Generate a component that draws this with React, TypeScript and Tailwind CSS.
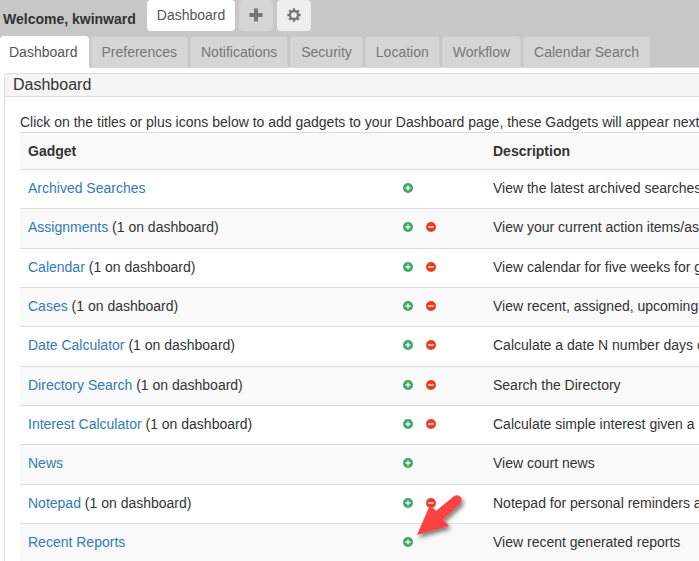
type Gadget = { name: string; onDashboard: boolean; description: string };

const gadgets: Gadget[] = [
  { name: "Archived Searches", onDashboard: false, description: "View the latest archived searches" },
  { name: "Assignments", onDashboard: true, description: "View your current action items/assignments" },
  { name: "Calendar", onDashboard: true, description: "View calendar for five weeks for given" },
  { name: "Cases", onDashboard: true, description: "View recent, assigned, upcoming" },
  { name: "Date Calculator", onDashboard: true, description: "Calculate a date N number days or" },
  { name: "Directory Search", onDashboard: true, description: "Search the Directory" },
  { name: "Interest Calculator", onDashboard: true, description: "Calculate simple interest given a" },
  { name: "News", onDashboard: false, description: "View court news" },
  { name: "Notepad", onDashboard: true, description: "Notepad for personal reminders and" },
  { name: "Recent Reports", onDashboard: false, description: "View recent generated reports" },
];

const pageTabs = ["Dashboard", "Preferences", "Notifications", "Security", "Location", "Workflow", "Calendar Search"];

function PlusIcon() {
  return (
    <svg viewBox="0 0 14 14" className="size-[14px]" aria-hidden="true">
      <path d="M5 .5h4V5h4.5v4H9v4.500H5V9H.5V5H5Z" fill="#777" />
    </svg>
  );
}

function GearIcon() {
  return (
    <svg viewBox="0 0 14 14" className="size-[14px]" aria-hidden="true">
      <circle cx="7" cy="7" r="4" fill="none" stroke="#777" strokeWidth="2.3" />
      <path
        d="M7 0.3v2.4M7 11.3v2.4M0.3 7h2.4M11.3 7h2.400M2.200 2.200l1.700 1.700M10.100 10.100l1.700 1.700M2.200 11.800l1.700-1.700M10.100 3.900l1.700-1.700"
        stroke="#777"
        strokeWidth="2.3"
      />
    </svg>
  );
}

function CircleIcon({ kind }: { kind: "plus" | "minus" }) {
  return (
    <svg viewBox="0 0 10 10" className="block size-[10px]" aria-hidden="true">
      <circle cx="5" cy="5" r="5" fill={kind === "plus" ? "#3fa866" : "#ec3b24"} />
      <path d={kind === "plus" ? "M2.5 5h5M5 2.5v5" : "M2.3 5h5.4"} stroke="#fff" strokeWidth="1.3" />
    </svg>
  );
}

function Arrow() {
  return (
    <svg
      viewBox="0 0 62 60"
      className="pointer-events-none absolute -top-[43px] left-[5px] h-[60px] w-[62px]"
      aria-hidden="true"
    >
      <defs>
        <filter id="arrow-shadow" x="-20%" y="-20%" width="150%" height="150%">
          <feDropShadow dx="2" dy="3" stdDeviation="2" floodColor="#000" floodOpacity="0.5" />
        </filter>
      </defs>
      <path
        d="M9 46L22 16L28 22L45.500 7.500Q50 4.500 53 8.500Q55 12 51.500 15.500L35 30.500L41 37Z"
        fill="#fc4343"
        filter="url(#arrow-shadow)"
      />
    </svg>
  );
}

export default function App() {
  return (
    <div className="overflow-hidden bg-white font-['Liberation_Sans',Arial,sans-serif] text-sm text-[#333]">
      <header className="bg-[#c7c7c7]">
        <div className="flex h-9 items-start">
          <strong className="pt-[9px] pr-[11px] pl-[3px] leading-5">Welcome, kwinward</strong>
          <div className="flex gap-1">
            <button className="h-[31px] rounded bg-white px-[10px] pb-[2px] text-[#555]">Dashboard</button>
            <button className="flex h-[31px] w-[34px] items-center justify-center rounded bg-[#d5d5d5] pb-[2px]" aria-label="Add">
              <PlusIcon />
            </button>
            <button className="flex h-[31px] w-[34px] items-center justify-center rounded bg-[#eee] pb-[2px]" aria-label="Settings">
              <GearIcon />
            </button>
          </div>
        </div>
        <nav className="flex h-8 gap-[2px] border-b border-[#ddd] whitespace-nowrap">
          {pageTabs.map((tab, i) => (
            <a
              key={tab}
              href="#"
              className={
                i === 0
                  ? "h-8 rounded-t bg-white pt-[6px] pr-[11px] pl-[9px] leading-5 text-[#555]"
                  : "h-8 rounded-t border border-b-0 border-[#d0d0d0] bg-[#d5d5d5] px-[10px] pt-[5px] leading-5 text-[#777]"
              }
            >
              {tab}
            </a>
          ))}
        </nav>
      </header>

      <main className="pt-[5px] pl-1">
        <section className="rounded-tl border-t border-l border-[#ddd]">
          <h1 className="rounded-tl border-b border-[#ddd] bg-[#f5f5f5] pl-2 text-base leading-[22px]">Dashboard</h1>
          <div className="pt-[15px] pl-[15px] whitespace-nowrap">
            <p className="leading-5">
              Click on the titles or plus icons below to add gadgets to your Dashboard page, these Gadgets will appear next
            </p>
            <table className="w-full table-fixed border-collapse text-left leading-5">
              <colgroup>
                <col className="w-[375px]" />
                <col className="w-[90px]" />
                <col />
              </colgroup>
              <thead>
                <tr className="h-[37px] border-t border-[#ddd] bg-[#f9f9f9]">
                  <th className="px-2">Gadget</th>
                  <th aria-label="Actions" />
                  <th className="px-2">Description</th>
                </tr>
              </thead>
              <tbody>
                {gadgets.map((g, i) => (
                  <tr
                    key={g.name}
                    className="h-[39px] border-t border-[#ddd] align-top even:bg-[#f9f9f9] nth-[3n+2]:h-[40px]"
                  >
                    <td className="px-2 pt-2">
                      <a href="#" className="text-[#337ab7]">{g.name}</a>
                      {g.onDashboard && " (1 on dashboard)"}
                    </td>
                    <td className="pt-2 pl-2">
                      <div className="relative flex h-5 items-center gap-[13px]">
                        <button aria-label={"Add " + g.name}>
                          <CircleIcon kind="plus" />
                        </button>
                        {g.onDashboard && (
                          <button aria-label={"Remove " + g.name}>
                            <CircleIcon kind="minus" />
                          </button>
                        )}
                        {i === gadgets.length - 1 && <Arrow />}
                      </div>
                    </td>
                    <td className="pt-2 pl-2">{g.description}</td>
                  </tr>
                ))}
              </tbody>
            </table>
          </div>
        </section>
      </main>
    </div>
  );
}
